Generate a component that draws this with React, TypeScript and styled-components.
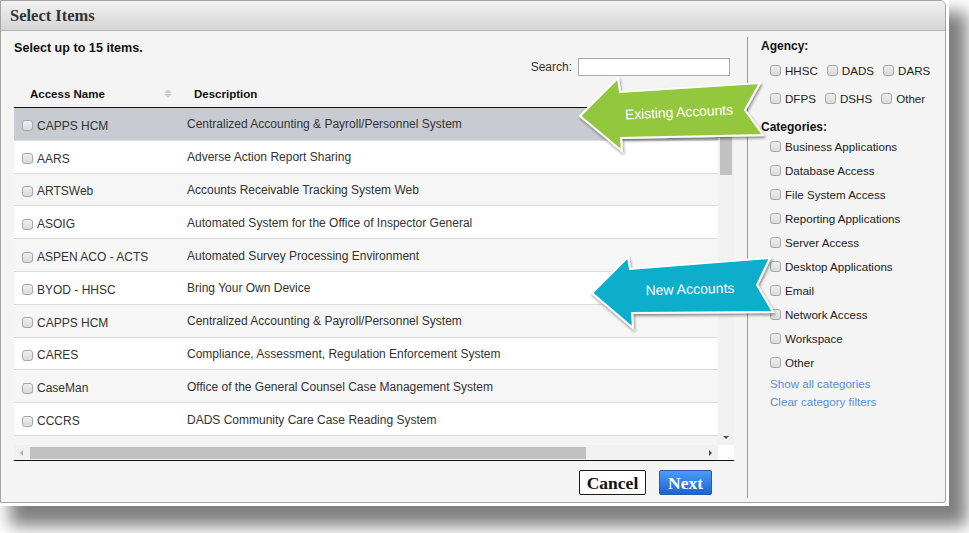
import React from "react";
import styled, { createGlobalStyle } from "styled-components";

const GlobalStyle = createGlobalStyle`
  html, body {
    margin: 0;
    padding: 0;
    background: #ffffff;
  }
  body {
    width: 969px;
    height: 533px;
    overflow: hidden;
    font-family: "Liberation Sans", Arial, sans-serif;
  }
`;

type Item = { name: string; desc: string };

const items: Item[] = [
  { name: "CAPPS HCM", desc: "Centralized Accounting & Payroll/Personnel System" },
  { name: "AARS", desc: "Adverse Action Report Sharing" },
  { name: "ARTSWeb", desc: "Accounts Receivable Tracking System Web" },
  { name: "ASOIG", desc: "Automated System for the Office of Inspector General" },
  { name: "ASPEN ACO - ACTS", desc: "Automated Survey Processing Environment" },
  { name: "BYOD - HHSC", desc: "Bring Your Own Device" },
  { name: "CAPPS HCM", desc: "Centralized Accounting & Payroll/Personnel System" },
  { name: "CARES", desc: "Compliance, Assessment, Regulation Enforcement System" },
  { name: "CaseMan", desc: "Office of the General Counsel Case Management System" },
  { name: "CCCRS", desc: "DADS Community Care Case Reading System" },
];

const agencies = [
  ["HHSC", "DADS", "DARS"],
  ["DFPS", "DSHS", "Other"],
];

const categories = [
  "Business Applications",
  "Database Access",
  "File System Access",
  "Reporting Applications",
  "Server Access",
  "Desktop Applications",
  "Email",
  "Network Access",
  "Workspace",
  "Other",
];

const App = () => {
  return (
    <>
      <GlobalStyle />
      <Frame>
        <Dialog>
          <TitleBar>Select Items</TitleBar>
          <Body>
            <Main>
              <Hint>Select up to 15 items.</Hint>
              <SearchRow>
                <SearchLabel>Search:</SearchLabel>
                <SearchInput />
              </SearchRow>
              <Table>
                <HeadRow>
                  <HeadCell>
                    Access Name
                    <SortIcon>
                      <span />
                      <span />
                    </SortIcon>
                  </HeadCell>
                  <HeadCell>Description</HeadCell>
                </HeadRow>
                <ScrollArea>
                  <Rows>
                    {items.map((it, i) => (
                      <Row key={i} selected={i === 0} striped={i % 2 === 0}>
                        <NameCell>
                          <Box />
                          {it.name}
                        </NameCell>
                        <DescCell>{it.desc}</DescCell>
                      </Row>
                    ))}
                  </Rows>
                  <VTrack>
                    <ArrowCell>
                      <Tri dir="up" />
                    </ArrowCell>
                    <VThumb />
                    <Spacer />
                    <ArrowCell>
                      <Tri dir="down" />
                    </ArrowCell>
                  </VTrack>
                  <HTrack>
                    <ArrowCell>
                      <Tri dir="left" light />
                    </ArrowCell>
                    <HThumb />
                    <Spacer />
                    <ArrowCell>
                      <Tri dir="right" />
                    </ArrowCell>
                  </HTrack>
                  <Corner />
                </ScrollArea>
              </Table>
              <Buttons>
                <CancelButton>Cancel</CancelButton>
                <NextButton>Next</NextButton>
              </Buttons>
            </Main>
            <Sidebar>
              <SideTitle>Agency:</SideTitle>
              {agencies.map((row, r) => (
                <AgencyRow key={r}>
                  {row.map((a) => (
                    <Check key={a}>
                      <Box />
                      {a}
                    </Check>
                  ))}
                </AgencyRow>
              ))}
              <SideTitle top={8}>Categories:</SideTitle>
              <CategoryList>
                {categories.map((c) => (
                  <CategoryRow key={c}>
                    <Check>
                      <Box />
                      {c}
                    </Check>
                  </CategoryRow>
                ))}
              </CategoryList>
              <SideLink>Show all categories</SideLink>
              <SideLink>Clear category filters</SideLink>
            </Sidebar>
          </Body>
        </Dialog>
        <Callouts viewBox="570 70 210 270">
          <defs>
            <filter id="drop" x="-20%" y="-20%" width="140%" height="150%">
              <feDropShadow dx="1" dy="2" stdDeviation="1.6" floodColor="#000" floodOpacity="0.45" />
            </filter>
          </defs>
          <polygon
            points="580,116 618,78 620,92 760,83 745,110 763,135 621,138 622,151"
            fill="#93c73d"
            stroke="#ffffff"
            strokeWidth="2"
            filter="url(#drop)"
          />
          <CalloutText x="679" y="117" textLength="108" transform="rotate(-2.6 679 113)">
            Existing Accounts
          </CalloutText>
          <polygon
            points="592,293 628,257 630,269 770,258 757,285 773,312 632,313 633,328"
            fill="#09aecb"
            stroke="#ffffff"
            strokeWidth="2"
            filter="url(#drop)"
          />
          <CalloutText x="690" y="294" textLength="89" transform="rotate(-1.6 690 290)">
            New Accounts
          </CalloutText>
        </Callouts>
      </Frame>
    </>
  );
};

export default App;

const Frame = styled.div`
  position: relative;
  width: 949px;
  height: 506px;
  box-sizing: border-box;
  padding: 0 3px 3px 0;
  background: #ffffff;
  box-shadow: 14px 16px 16px 4px rgba(0, 0, 0, 0.5);
`;

const Dialog = styled.div`
  width: 946px;
  height: 503px;
  box-sizing: border-box;
  border: 1px solid #a4a4a4;
  border-radius: 0 6px 3px 0;
  background: #f4f4f4;
  display: flex;
  flex-direction: column;
  overflow: hidden;
`;

const TitleBar = styled.div`
  height: 30px;
  flex: 0 0 30px;
  box-sizing: border-box;
  border-bottom: 1px solid #b4b4b4;
  background: linear-gradient(#f2f2f2, #d5d5d5);
  padding-left: 9px;
  display: flex;
  align-items: center;
  font-family: "Liberation Serif", "Times New Roman", serif;
  font-weight: bold;
  font-size: 16.5px;
  color: #333;
`;

const Body = styled.div`
  flex: 1;
  display: flex;
`;

const Main = styled.div`
  flex: 0 0 746px;
  box-sizing: border-box;
  padding: 10px 12px 0 13px;
  display: flex;
  flex-direction: column;
`;

const Hint = styled.div`
  font-size: 12.6px;
  line-height: 14px;
  font-weight: bold;
  color: #111;
`;

const SearchRow = styled.div`
  margin-top: 3px;
  padding-right: 5px;
  display: flex;
  justify-content: flex-end;
  align-items: center;
  gap: 6px;
`;

const SearchLabel = styled.span`
  font-size: 12px;
  color: #333;
`;

const SearchInput = styled.div`
  width: 152px;
  height: 18px;
  box-sizing: border-box;
  border: 1px solid #a9a9a9;
  background: #fff;
`;

const Table = styled.div`
  margin-top: 4px;
  width: 720px;
  display: flex;
  flex-direction: column;
`;

const HeadRow = styled.div`
  height: 28px;
  box-sizing: border-box;
  border-bottom: 1px solid #111;
  display: grid;
  grid-template-columns: 166px 1fr;
`;

const HeadCell = styled.div`
  display: flex;
  align-items: center;
  justify-content: space-between;
  padding: 0 8px 0 16px;
  font-size: 11.5px;
  font-weight: bold;
  color: #111;
  &:last-child {
    padding-left: 14px;
    justify-content: flex-start;
  }
`;

const SortIcon = styled.span`
  display: flex;
  flex-direction: column;
  gap: 1px;
  span {
    width: 0;
    height: 0;
    border-left: 4px solid transparent;
    border-right: 4px solid transparent;
  }
  span:first-child {
    border-bottom: 4px solid #d0d0d0;
  }
  span:last-child {
    border-top: 4px solid #d0d0d0;
  }
`;

const ScrollArea = styled.div`
  display: grid;
  grid-template-columns: 1fr 16px;
  grid-template-rows: 337px 15px;
  border-bottom: 1px solid #111;
`;

const Rows = styled.div`
  overflow: hidden;
  background: #f4f4f4;
`;

const Row = styled.div<{ selected: boolean; striped: boolean }>`
  height: 32.8px;
  box-sizing: border-box;
  border-bottom: 1px solid #dcdcdc;
  display: grid;
  grid-template-columns: 166px 1fr;
  align-items: center;
  background: ${(p) => (p.selected ? "#c9cbd2" : p.striped ? "#f6f6f6" : "#ffffff")};
  font-size: 12px;
  color: #333;
`;

const NameCell = styled.div`
  display: flex;
  align-items: center;
  gap: 4px;
  padding-left: 8px;
  padding-top: 4px;
`;

const DescCell = styled.div`
  padding-left: 7px;
  padding-top: 1px;
  white-space: nowrap;
`;

const Box = styled.span`
  display: inline-block;
  flex: 0 0 11px;
  width: 11px;
  height: 11px;
  box-sizing: border-box;
  border: 1px solid #a8a8a8;
  border-radius: 3px;
  background: linear-gradient(#f0f0f0, #d9d9d9);
`;

const VTrack = styled.div`
  background: #f1f1f1;
  display: flex;
  flex-direction: column;
  align-items: center;
`;

const HTrack = styled.div`
  background: #f1f1f1;
  display: flex;
  align-items: center;
`;

const Corner = styled.div`
  background: #ffffff;
`;

const ArrowCell = styled.div`
  flex: 0 0 15px;
  width: 15px;
  height: 15px;
  display: flex;
  align-items: center;
  justify-content: center;
`;

const Tri = styled.span<{ dir: "up" | "down" | "left" | "right"; light?: boolean }>`
  width: 0;
  height: 0;
  ${(p) => {
    const c = p.light ? "#b0b0b0" : "#505050";
    switch (p.dir) {
      case "up":
        return `border-left:3px solid transparent;border-right:3px solid transparent;border-bottom:3px solid ${c};`;
      case "down":
        return `border-left:3px solid transparent;border-right:3px solid transparent;border-top:3px solid ${c};`;
      case "left":
        return `border-top:3px solid transparent;border-bottom:3px solid transparent;border-right:3px solid ${c};`;
      default:
        return `border-top:3px solid transparent;border-bottom:3px solid transparent;border-left:3px solid ${c};`;
    }
  }}
`;

const VThumb = styled.div`
  margin-top: 2px;
  width: 12px;
  height: 50px;
  background: #c1c1c1;
`;

const HThumb = styled.div`
  margin-left: 1px;
  width: 556px;
  height: 12px;
  background: #c1c1c1;
`;

const Spacer = styled.div`
  flex: 1;
`;

const Buttons = styled.div`
  margin-top: 9px;
  width: 720px;
  padding-right: 22px;
  box-sizing: border-box;
  display: flex;
  justify-content: flex-end;
  gap: 13px;
`;

const ButtonBase = styled.button`
  height: 25px;
  box-sizing: border-box;
  border-radius: 2px;
  padding: 0;
  font-family: "Liberation Serif", "Times New Roman", serif;
  font-weight: bold;
  font-size: 17.5px;
  line-height: 20px;
`;

const CancelButton = styled(ButtonBase)`
  width: 67px;
  border: 1px solid #1a1a1a;
  background: #ffffff;
  color: #111;
`;

const NextButton = styled(ButtonBase)`
  width: 53px;
  border: 1px solid #2b5aa8;
  background: linear-gradient(#4c9cf6, #1c63d4);
  color: #ffffff;
`;

const Sidebar = styled.div`
  flex: 1;
  margin: 6px 0 4px 0;
  border-left: 1px solid #9c9c9c;
  padding: 2px 0 0 13px;
  display: flex;
  flex-direction: column;
  font-size: 11.6px;
  color: #222;
`;

const SideTitle = styled.div<{ top?: number }>`
  margin-top: ${(p) => p.top ?? 0}px;
  font-size: 12px;
  line-height: 14px;
  font-weight: bold;
  color: #111;
`;

const AgencyRow = styled.div`
  height: 28px;
  padding-left: 9px;
  display: flex;
  align-items: center;
  gap: 9px;
  &:nth-of-type(2) {
    margin-top: 3px;
  }
`;

const Check = styled.label`
  display: flex;
  align-items: center;
  gap: 4px;
  white-space: nowrap;
`;

const CategoryList = styled.div`
  display: flex;
  flex-direction: column;
`;

const CategoryRow = styled.div`
  height: 24px;
  padding-left: 9px;
  display: flex;
  align-items: center;
`;

const SideLink = styled.a`
  display: block;
  margin-left: 9px;
  margin-top: 1px;
  line-height: 18px;
  color: #5b8edb;
  cursor: pointer;
  & + & {
    margin-top: 0;
  }
`;

const Callouts = styled.svg`
  position: absolute;
  left: 570px;
  top: 70px;
  width: 210px;
  height: 270px;
  overflow: visible;
  pointer-events: none;
`;

const CalloutText = styled.text`
  font-family: "Liberation Sans", Arial, sans-serif;
  font-size: 14px;
  fill: #ffffff;
  text-anchor: middle;
`;
